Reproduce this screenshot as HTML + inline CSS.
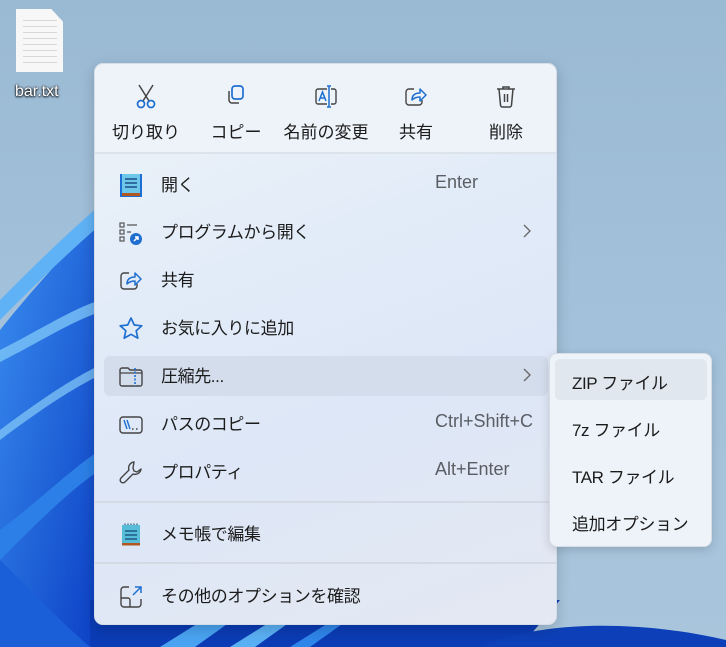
<!DOCTYPE html>
<html><head><meta charset="utf-8"><style>
*{margin:0;padding:0;box-sizing:border-box}
body{width:726px;height:647px;overflow:hidden;position:relative;font-family:"Liberation Sans","Noto Sans CJK JP",sans-serif;background:linear-gradient(180deg,#9ab9d3 0%,#a3c1da 50%,#a9c5dc 100%)}
.bg{position:absolute;left:0;top:0}
.file{position:absolute;left:16px;top:9px;width:47px;height:63px;background:#fafafa;clip-path:polygon(0 0,75% 0,100% 20%,100% 100%,0 100%);background-image:repeating-linear-gradient(180deg,transparent 0 5px,#d8d8d8 5px 6px);background-size:34px 50px;background-position:7px 6px;background-repeat:no-repeat;background-color:#f7f7f7}
.fname{position:absolute;left:15px;top:83px;font-size:16px;color:#fff;text-shadow:0 0 2px #000,0 1px 2px #000}
.menu{position:absolute;left:94px;top:63px;width:463px;height:562px;border-radius:9px;background:linear-gradient(160deg,#eef3f8 0%,#e2ecf8 35%,#dde7f7 60%,#e4e8f2 100%);border:1px solid #d6dde6;box-shadow:0 4px 14px rgba(0,0,0,.18)}
.tb{position:absolute;top:0;left:0;right:0;height:90px;background:#eef3f9;border-radius:9px 9px 0 0;border-bottom:2px solid #dde3ea}
.tbi{position:absolute;top:0;width:70px;text-align:center}
.tbi svg{position:absolute;top:20px;left:23px}
.tbi span{position:absolute;top:54px;left:-10px;right:-10px;font-size:17px;color:#1b1b1b;white-space:nowrap;text-align:center}
.row{position:absolute;left:9px;width:444px;height:40px}
.row .ic{position:absolute;left:14px;top:8px}
.row .t{position:absolute;left:57px;top:6px;font-size:17px;letter-spacing:-0.4px;color:#1b1b1b;white-space:nowrap}
.row .k{position:absolute;left:331px;top:7px;font-size:18px;color:#5a5e64}
.row .ch{position:absolute;left:418px;top:11px}
.sep{position:absolute;left:0;right:0;height:2px;background:#d3dae4}
.sub{position:absolute;left:549px;top:353px;width:163px;height:194px;border-radius:8px;background:#eef3f9;border:1px solid #d6dde6;box-shadow:0 3px 10px rgba(0,0,0,.15)}
.si{position:absolute;left:22px;font-size:17px;letter-spacing:-0.4px;color:#1b1b1b;white-space:nowrap}
</style></head><body>
<svg class="bg" width="726" height="647" viewBox="0 0 726 647">
<defs><linearGradient id="g1" x1="0" y1="0" x2="1" y2="1"><stop offset="0" stop-color="#3a8ef0"/><stop offset="1" stop-color="#0b3fc4"/></linearGradient></defs>
<path d="M0 330 C40 280 70 250 100 215 L100 647 L0 647 Z" fill="url(#g1)"/>
<path d="M0 300 C30 270 60 240 100 205 L100 225 C60 260 30 290 0 320Z" fill="#5fb2f5"/>
<path d="M0 350 C40 330 70 310 100 300 L100 312 C70 322 40 342 0 362Z" fill="#7cc4f7" opacity=".8"/>
<path d="M0 430 C40 400 70 380 100 365 L100 375 C70 390 40 410 0 440Z" fill="#86ccf8" opacity=".7"/>
<path d="M0 530 C40 500 70 470 100 450 L100 470 C70 490 40 520 0 560Z" fill="#2b7fe6"/>
<path d="M0 560 C40 600 70 630 90 647 L0 647Z" fill="#1a5fd8"/>
<path d="M90 600 L560 600 L520 647 L90 647Z" fill="#0b3cb5"/>
<path d="M160 647 L200 622 L230 622 L195 647Z" fill="#4aa3f2"/>
<path d="M230 647 L270 622 L290 622 L255 647Z" fill="#5ab0f4"/>
<path d="M290 647 L330 622 L345 622 L310 647Z" fill="#2f86ea"/>
<path d="M480 647 C540 620 640 620 726 640 L726 647Z" fill="#0d40b8"/>
</svg>
<div class="file"></div>
<div class="fname">bar.txt</div>

<div class="menu">
 <div class="tb">
  <div class="tbi" style="left:16px">
   <svg width="24" height="26" viewBox="0 0 24 26" fill="none"><path d="M5 1 L15 17 M19 1 L9 17" stroke="#444" stroke-width="1.5"/><circle cx="7" cy="20" r="3.5" stroke="#1e6fd0" stroke-width="1.7"/><circle cx="17" cy="20" r="3.5" stroke="#1e6fd0" stroke-width="1.7"/></svg>
   <span>切り取り</span></div>
  <div class="tbi" style="left:106px">
   <svg width="24" height="26" viewBox="0 0 24 26" fill="none"><rect x="8" y="2" width="11" height="13" rx="3" stroke="#1e6fd0" stroke-width="1.7"/><path d="M5 7 v9 a3 3 0 0 0 3 3 h7" stroke="#444" stroke-width="1.5"/></svg>
   <span>コピー</span></div>
  <div class="tbi" style="left:196px">
   <svg width="26" height="26" viewBox="0 0 26 26" fill="none"><path d="M13 5 H4 a2 2 0 0 0 -2 2 v11 a2 2 0 0 0 2 2 H13 M17 5 h3 a2 2 0 0 1 2 2 v11 a2 2 0 0 1 -2 2 h-3" stroke="#444" stroke-width="1.4"/><path d="M15 2 v21 M13 2 h4 M13 23 h4" stroke="#1e6fd0" stroke-width="1.5"/><path d="M5 17 L8.5 8 L12 17 M6.3 14 h4.4" stroke="#1e6fd0" stroke-width="1.5"/></svg>
   <span>名前の変更</span></div>
  <div class="tbi" style="left:286px">
   <svg width="24" height="26" viewBox="0 0 24 26" fill="none"><path d="M10 5 H5 a3 3 0 0 0 -3 3 v10 a3 3 0 0 0 3 3 h10 a3 3 0 0 0 3 -3 v-2" stroke="#444" stroke-width="1.4"/><path d="M8 16 c0 -5 3 -7 8 -7 v-4 l6 6 -6 6 v-4 c-4 0 -6 1 -8 3z" stroke="#1e6fd0" stroke-width="1.5" stroke-linejoin="round"/></svg>
   <span>共有</span></div>
  <div class="tbi" style="left:376px">
   <svg width="24" height="26" viewBox="0 0 24 26" fill="none"><path d="M3 5 h18 M9 5 v-2 h6 v2 M5 5 l1.5 16 a2 2 0 0 0 2 2 h7 a2 2 0 0 0 2 -2 L19 5 M10.5 10 v8 M13.5 10 v8" stroke="#444" stroke-width="1.5"/></svg>
   <span>削除</span></div>
 </div>

 <div class="row" style="top:101px">
  <svg class="ic" width="26" height="26" viewBox="0 0 26 26"><rect x="2" y="1" width="22" height="23" fill="#1d6fd6"/><rect x="4" y="1" width="18" height="19" fill="#6cc7e8"/><rect x="4" y="20" width="18" height="3" fill="#b0581f"/><path d="M7 6h12M7 10h12M7 14h12" stroke="#1d4f8a" stroke-width="1.6"/></svg>
  <span class="t">開く</span><span class="k">Enter</span></div>
 <div class="row" style="top:148px">
  <svg class="ic" width="26" height="26" viewBox="0 0 26 26" fill="none"><rect x="2" y="3" width="4" height="4" stroke="#555" stroke-width="1.2"/><rect x="2" y="10" width="4" height="4" stroke="#555" stroke-width="1.2"/><rect x="2" y="17" width="4" height="4" stroke="#555" stroke-width="1.2"/><path d="M9 5h10M9 12h4" stroke="#555" stroke-width="1.3"/><circle cx="18" cy="19" r="6" fill="#1e6fd0"/><path d="M16 21 l4 -4 M17 17 h3 v3" stroke="#fff" stroke-width="1.5"/></svg>
  <span class="t">プログラムから開く</span>
  <svg class="ch" width="10" height="16" viewBox="0 0 10 16" fill="none"><path d="M2 2 l6 6 -6 6" stroke="#666" stroke-width="1.3"/></svg></div>
 <div class="row" style="top:196px">
  <svg class="ic" width="26" height="26" viewBox="0 0 24 26" fill="none"><path d="M10 5 H5 a3 3 0 0 0 -3 3 v10 a3 3 0 0 0 3 3 h10 a3 3 0 0 0 3 -3 v-2" stroke="#444" stroke-width="1.4"/><path d="M8 16 c0 -5 3 -7 8 -7 v-4 l6 6 -6 6 v-4 c-4 0 -6 1 -8 3z" stroke="#1e6fd0" stroke-width="1.5" stroke-linejoin="round"/></svg>
  <span class="t">共有</span></div>
 <div class="row" style="top:244px">
  <svg class="ic" width="26" height="26" viewBox="0 0 26 26" fill="none"><path d="M13 2 l3.3 7 7.5 .8 -5.6 5 1.6 7.4 -6.8 -3.9 -6.8 3.9 1.6 -7.4 -5.6 -5 7.5 -.8z" stroke="#1e6fd0" stroke-width="1.7" stroke-linejoin="round"/></svg>
  <span class="t">お気に入りに追加</span></div>
 <div class="row" style="top:292px;background:#d3ddec;border-radius:6px">
  <svg class="ic" width="26" height="26" viewBox="0 0 26 26" fill="none"><path d="M2 6 a2 2 0 0 1 2 -2 h6 l2 2 h10 a2 2 0 0 1 2 2 v12 a2 2 0 0 1 -2 2 H4 a2 2 0 0 1 -2 -2z" stroke="#444" stroke-width="1.4"/><path d="M2 9 h22" stroke="#444" stroke-width="1.2"/><path d="M17 4 v18" stroke="#1e6fd0" stroke-width="1.6" stroke-dasharray="2 1.5"/></svg>
  <span class="t">圧縮先...</span>
  <svg class="ch" width="10" height="16" viewBox="0 0 10 16" fill="none"><path d="M2 2 l6 6 -6 6" stroke="#666" stroke-width="1.3"/></svg></div>
 <div class="row" style="top:340px">
  <svg class="ic" width="26" height="26" viewBox="0 0 26 26" fill="none"><rect x="2" y="5" width="22" height="16" rx="3" stroke="#444" stroke-width="1.4"/><path d="M6 8 l3 9 M9 8 l3 9" stroke="#1e6fd0" stroke-width="1.4"/><path d="M14 17h1.5M18 17h1.5" stroke="#444" stroke-width="1.5"/></svg>
  <span class="t">パスのコピー</span><span class="k">Ctrl+Shift+C</span></div>
 <div class="row" style="top:388px">
  <svg class="ic" width="26" height="26" viewBox="0 0 26 26" fill="none"><path d="M16 2 a6 6 0 0 0 -5 8 L3 18 a2.5 2.5 0 0 0 4 4 l8 -8 a6 6 0 0 0 8 -5 l-4 3 -3 -1 -1 -3z" stroke="#444" stroke-width="1.4" stroke-linejoin="round"/></svg>
  <span class="t">プロパティ</span><span class="k">Alt+Enter</span></div>
 <div class="sep" style="top:437px"></div>
 <div class="row" style="top:450px">
  <svg class="ic" width="26" height="26" viewBox="0 0 26 26"><rect x="4" y="3" width="18" height="18" fill="#56bcd8"/><rect x="4" y="21" width="18" height="2.5" fill="#b0581f"/><path d="M7 3v-1.5M10 3v-1.5M13 3v-1.5M16 3v-1.5M19 3v-1.5" stroke="#255a7a" stroke-width="1.2"/><path d="M7 9h12M7 13h12M7 17h12" stroke="#1d5b86" stroke-width="1.6"/></svg>
  <span class="t">メモ帳で編集</span></div>
 <div class="sep" style="top:498px"></div>
 <div class="row" style="top:512px">
  <svg class="ic" width="26" height="26" viewBox="0 0 26 26" fill="none"><path d="M11 3 H6 a3 3 0 0 0 -3 3 v14 a3 3 0 0 0 3 3 h14 a3 3 0 0 0 3 -3 v-5" stroke="#444" stroke-width="1.4"/><path d="M3 14 h7 a2 2 0 0 1 2 2 v7" stroke="#444" stroke-width="1.4"/><path d="M15 11 L23 3 M17 3 h6 v6" stroke="#1e6fd0" stroke-width="1.5"/></svg>
  <span class="t">その他のオプションを確認</span></div>
</div>

<div class="sub">
 <div style="position:absolute;left:5px;top:5px;width:152px;height:41px;background:#e1e7ef;border-radius:5px"></div>
 <span class="si" style="top:15px">ZIP ファイル</span>
 <span class="si" style="top:62px">7z ファイル</span>
 <span class="si" style="top:109px">TAR ファイル</span>
 <span class="si" style="top:156px">追加オプション</span>
</div>
</body></html>
